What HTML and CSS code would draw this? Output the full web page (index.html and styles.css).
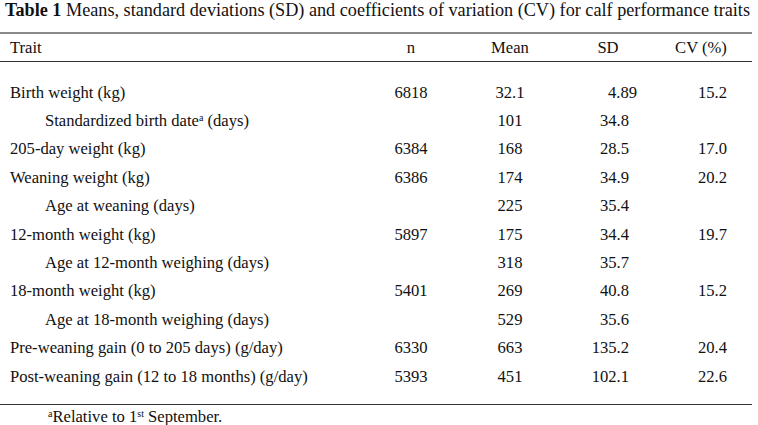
FILE: index.html
```html
<!DOCTYPE html>
<html>
<head>
<meta charset="utf-8">
<link rel="stylesheet" href="styles.css">
</head>
<body>
<div class="title"><b>Table 1</b> Means, standard deviations (SD) and coefficients of variation (CV) for calf performance traits</div>
<table class="tbl">
  <colgroup>
    <col class="c-trait"><col class="c-n"><col class="c-mean"><col class="c-sd"><col class="c-cv">
  </colgroup>
  <thead>
    <tr>
      <th class="h-trait">Trait</th>
      <th class="h-n">n</th>
      <th class="h-mean">Mean</th>
      <th class="h-sd">SD</th>
      <th class="h-cv">CV (%)</th>
    </tr>
  </thead>
  <tbody>
    <tr class="spacer-top"><td colspan="5"></td></tr>
    <tr><td class="trait">Birth weight (kg)</td><td class="n">6818</td><td class="mean">32.1</td><td class="sd sd-shift">4.89</td><td class="cv">15.2</td></tr>
    <tr><td class="trait sub">Standardized birth date<sup>a</sup> (days)</td><td class="n"></td><td class="mean">101</td><td class="sd">34.8</td><td class="cv"></td></tr>
    <tr><td class="trait">205-day weight (kg)</td><td class="n">6384</td><td class="mean">168</td><td class="sd">28.5</td><td class="cv">17.0</td></tr>
    <tr><td class="trait">Weaning weight (kg)</td><td class="n">6386</td><td class="mean">174</td><td class="sd">34.9</td><td class="cv">20.2</td></tr>
    <tr><td class="trait sub">Age at weaning (days)</td><td class="n"></td><td class="mean">225</td><td class="sd">35.4</td><td class="cv"></td></tr>
    <tr><td class="trait">12-month weight (kg)</td><td class="n">5897</td><td class="mean">175</td><td class="sd">34.4</td><td class="cv">19.7</td></tr>
    <tr><td class="trait sub">Age at 12-month weighing (days)</td><td class="n"></td><td class="mean">318</td><td class="sd">35.7</td><td class="cv"></td></tr>
    <tr><td class="trait">18-month weight (kg)</td><td class="n">5401</td><td class="mean">269</td><td class="sd">40.8</td><td class="cv">15.2</td></tr>
    <tr><td class="trait sub">Age at 18-month weighing (days)</td><td class="n"></td><td class="mean">529</td><td class="sd">35.6</td><td class="cv"></td></tr>
    <tr><td class="trait">Pre-weaning gain (0 to 205 days) (g/day)</td><td class="n">6330</td><td class="mean">663</td><td class="sd">135.2</td><td class="cv">20.4</td></tr>
    <tr><td class="trait">Post-weaning gain (12 to 18 months) (g/day)</td><td class="n">5393</td><td class="mean">451</td><td class="sd">102.1</td><td class="cv">22.6</td></tr>
    <tr class="spacer-bottom"><td colspan="5"></td></tr>
  </tbody>
</table>
<div class="footnote"><sup>a</sup>Relative to 1<sup>st</sup> September.</div>
</body>
</html>
```
FILE: styles.css
```css
html, body {
  margin: 0;
  padding: 0;
  background: #ffffff;
}
body {
  font-family: "Liberation Serif", "Times New Roman", serif;
  color: #111111;
  width: 758px;
  height: 425px;
  overflow: hidden;
}
.title {
  font-size: 18.2px;
  line-height: 20px;
  padding-left: 5px;
  height: 32px;
  white-space: nowrap;
}
.title b {
  font-weight: bold;
}
.tbl {
  width: 752px;
  border-collapse: collapse;
  table-layout: fixed;
  font-size: 16.6px;
}
.c-trait { width: 370px; }
.c-n { width: 82px; }
.c-mean { width: 116px; }
.c-sd { width: 92px; }
.c-cv { width: 92px; }
.tbl th {
  font-weight: normal;
  height: 27px;
  padding: 0;
  border-top: 2px solid #8a8a8a;
  border-bottom: 1px solid #333333;
  line-height: 17px;
}
.h-trait { text-align: left; padding-left: 10px !important; }
.h-n { text-align: center; }
.h-mean { text-align: center; }
.h-sd { text-align: center; padding-right: 12px !important; }
.h-cv { text-align: center; padding-right: 10px !important; }
.tbl td {
  padding: 0;
  height: 28.4px;
  line-height: 17px;
  white-space: nowrap;
}
.spacer-top td { height: 16px; }
.spacer-bottom td {
  height: 14px;
  border-bottom: 1px solid #333333;
}
.trait { padding-left: 10px !important; }
.trait.sub { padding-left: 45px !important; }
.n { text-align: center; }
.mean { text-align: center; }
.sd { text-align: right; padding-right: 31px !important; }
.sd.sd-shift { padding-right: 23px !important; }
.cv { text-align: right; padding-right: 25px !important; }
sup {
  font-size: 10px;
  line-height: 0;
  vertical-align: 5px;
}
.footnote {
  font-size: 16.6px;
  line-height: 18px;
  padding-left: 48px;
  padding-top: 3px;
}
```
